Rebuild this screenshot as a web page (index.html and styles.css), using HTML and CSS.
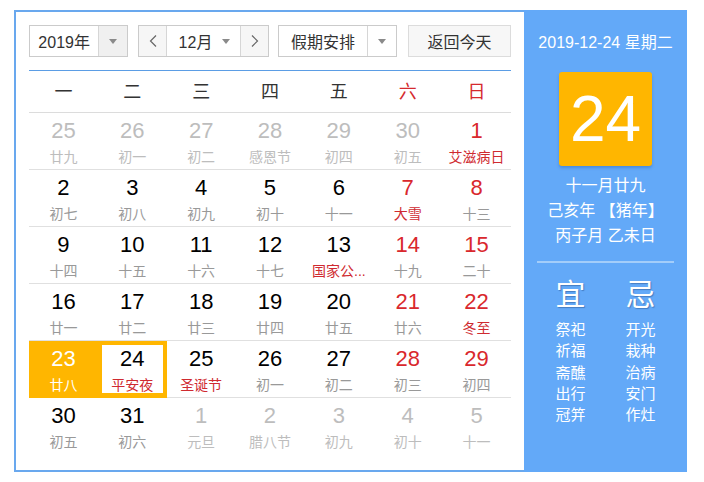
FILE: index.html
```html
<!DOCTYPE html>
<html lang="zh-CN">
<head>
<meta charset="utf-8">
<title>万年历</title>
<link rel="stylesheet" href="styles.css">
</head>
<body>
<div class="cal">
  <div class="main">
    <div class="controls">
      <div class="sel year"><span class="sel-text">2019年</span><span class="sel-arrow gray"><i class="tri"></i></span></div>
      <div class="month">
        <span class="nav"><svg width="8" height="12" viewBox="0 0 8 12"><polyline points="7,0.5 1.5,6 7,11.5" fill="none" stroke="#666" stroke-width="1.2"/></svg></span>
        <span class="month-text">12月<i class="tri"></i></span>
        <span class="nav"><svg width="8" height="12" viewBox="0 0 8 12"><polyline points="1,0.5 6.5,6 1,11.5" fill="none" stroke="#666" stroke-width="1.2"/></svg></span>
      </div>
      <div class="sel holiday"><span class="sel-text">假期安排</span><span class="sel-arrow"><i class="tri"></i></span></div>
      <div class="today-btn">返回今天</div>
    </div>
    <div class="week">
      <span>一</span><span>二</span><span>三</span><span>四</span><span>五</span><span class="red">六</span><span class="red">日</span>
    </div>
    <div class="grid">
      <div class="cell other"><b>25</b><em>廿九</em></div>
      <div class="cell other"><b>26</b><em>初一</em></div>
      <div class="cell other"><b>27</b><em>初二</em></div>
      <div class="cell other"><b>28</b><em>感恩节</em></div>
      <div class="cell other"><b>29</b><em>初四</em></div>
      <div class="cell other"><b>30</b><em>初五</em></div>
      <div class="cell wk fest"><b>1</b><em>艾滋病日</em></div>

      <div class="cell"><b>2</b><em>初七</em></div>
      <div class="cell"><b>3</b><em>初八</em></div>
      <div class="cell"><b>4</b><em>初九</em></div>
      <div class="cell"><b>5</b><em>初十</em></div>
      <div class="cell"><b>6</b><em>十一</em></div>
      <div class="cell wk fest"><b>7</b><em>大雪</em></div>
      <div class="cell wk"><b>8</b><em>十三</em></div>

      <div class="cell"><b>9</b><em>十四</em></div>
      <div class="cell"><b>10</b><em>十五</em></div>
      <div class="cell"><b>11</b><em>十六</em></div>
      <div class="cell"><b>12</b><em>十七</em></div>
      <div class="cell fest"><b>13</b><em>国家公...</em></div>
      <div class="cell wk"><b>14</b><em>十九</em></div>
      <div class="cell wk"><b>15</b><em>二十</em></div>

      <div class="cell"><b>16</b><em>廿一</em></div>
      <div class="cell"><b>17</b><em>廿二</em></div>
      <div class="cell"><b>18</b><em>廿三</em></div>
      <div class="cell"><b>19</b><em>廿四</em></div>
      <div class="cell"><b>20</b><em>廿五</em></div>
      <div class="cell wk"><b>21</b><em>廿六</em></div>
      <div class="cell wk fest"><b>22</b><em>冬至</em></div>

      <div class="cell selected"><b>23</b><em>廿八</em></div>
      <div class="cell today fest"><b>24</b><em>平安夜</em></div>
      <div class="cell fest"><b>25</b><em>圣诞节</em></div>
      <div class="cell"><b>26</b><em>初一</em></div>
      <div class="cell"><b>27</b><em>初二</em></div>
      <div class="cell wk"><b>28</b><em>初三</em></div>
      <div class="cell wk"><b>29</b><em>初四</em></div>

      <div class="cell last"><b>30</b><em>初五</em></div>
      <div class="cell last"><b>31</b><em>初六</em></div>
      <div class="cell last other"><b>1</b><em>元旦</em></div>
      <div class="cell last other"><b>2</b><em>腊八节</em></div>
      <div class="cell last other"><b>3</b><em>初九</em></div>
      <div class="cell last other"><b>4</b><em>初十</em></div>
      <div class="cell last other"><b>5</b><em>十一</em></div>
    </div>
  </div>
  <div class="side">
    <div class="side-date">2019-12-24 星期二</div>
    <div class="big-day">24</div>
    <div class="lunar">
      <div>十一月廿九</div>
      <div>己亥年 【猪年】</div>
      <div>丙子月 乙未日</div>
    </div>
    <div class="sep"></div>
    <div class="yiji">
      <div class="col">
        <div class="yj-title">宜</div>
        <div class="yj-item">祭祀</div>
        <div class="yj-item">祈福</div>
        <div class="yj-item">斋醮</div>
        <div class="yj-item">出行</div>
        <div class="yj-item">冠笄</div>
      </div>
      <div class="col">
        <div class="yj-title">忌</div>
        <div class="yj-item">开光</div>
        <div class="yj-item">栽种</div>
        <div class="yj-item">治病</div>
        <div class="yj-item">安门</div>
        <div class="yj-item">作灶</div>
      </div>
    </div>
  </div>
</div>
</body>
</html>
```

FILE: styles.css
```css
* { box-sizing: border-box; }
body {
  margin: 0;
  background: #fff;
  font-family: "Liberation Sans", Arial, "Noto Sans CJK SC", sans-serif;
  color: #333;
}
.cal {
  display: flex;
  margin: 10px 0 0 14px;
  width: 673px;
  height: 462px;
}
.main {
  width: 510px;
  height: 462px;
  border: 2px solid #69a8ee;
  border-right: none;
  padding: 13px 13px 0 13px;
}
.controls {
  display: flex;
  height: 32px;
  font-size: 16px;
  color: #333;
}
.sel {
  display: flex;
  height: 32px;
  border: 1px solid #cbcbcb;
  background: #fff;
}
.sel-text {
  display: flex;
  align-items: center;
  justify-content: center;
}
.sel-arrow {
  width: 29px;
  display: flex;
  align-items: center;
  justify-content: center;
  border-left: 1px solid #d6d6d6;
}
.sel-arrow.gray { background: #f0f0f0; }
.tri {
  display: inline-block;
  width: 0;
  height: 0;
  border-left: 4px solid transparent;
  border-right: 4px solid transparent;
  border-top: 5px solid #8a8a8a;
}
.year { width: 99px; }
.year .sel-text { width: 69px; }
.month {
  display: flex;
  margin-left: 10px;
  width: 131px;
  height: 32px;
  border: 1px solid #cbcbcb;
}
.nav {
  width: 28px;
  display: flex;
  align-items: center;
  justify-content: center;
  background: #f6f6f6;
}
.nav:first-child { border-right: 1px solid #d6d6d6; }
.nav:last-child { border-left: 1px solid #d6d6d6; }
.month-text {
  flex: 1;
  display: flex;
  align-items: center;
  justify-content: center;
  gap: 10px;
  padding-left: 2px;
}
.holiday { margin-left: 9px; width: 119px; }
.holiday .sel-text { width: 89px; }
.holiday .sel-arrow { width: 29px; }
.today-btn {
  margin-left: 11px;
  width: 103px;
  height: 32px;
  border: 1px solid #dcdcdc;
  background: #f7f7f7;
  display: flex;
  align-items: center;
  justify-content: center;
}
.week {
  margin-top: 13px;
  border-top: 1px solid #5b9de5;
  border-bottom: 1px solid #dcdcdc;
  display: grid;
  grid-template-columns: repeat(7, 1fr);
  height: 43px;
  font-size: 18px;
  color: #333;
}
.week span {
  display: flex;
  align-items: center;
  justify-content: center;
  padding-bottom: 3px;
}
.week .red { color: #d52a2e; }
.grid {
  display: grid;
  grid-template-columns: repeat(7, 1fr);
  grid-auto-rows: 57px;
}
.cell {
  border-bottom: 1px solid #e0e0e0;
  display: flex;
  flex-direction: column;
  align-items: center;
  padding-top: 5px;
  overflow: hidden;
  white-space: nowrap;
}
.cell.last { border-bottom: none; }
.cell b {
  font-weight: normal;
  font-size: 22px;
  line-height: 26px;
  color: #000;
}
.cell em {
  font-style: normal;
  font-size: 14px;
  line-height: 20px;
  margin-top: 3px;
  color: #999;
}
.cell.wk b { color: #d9282d; }
.cell.fest em { color: #cf2a30; }
.cell.other b,
.cell.other em { color: #bdbdbd; }
.cell.selected {
  background: #ffb600;
  border-bottom-color: #ffb600;
}
.cell.selected b,
.cell.selected em { color: #fff; }
.cell.today {
  background: #fff;
  box-shadow: inset 0 0 0 4px #ffb600;
  border-bottom-color: #ffb600;
}
.side {
  width: 163px;
  height: 462px;
  background: #63a9f8;
  color: #fff;
  text-align: center;
  padding-top: 23px;
  display: flex;
  flex-direction: column;
  align-items: center;
}
.side-date {
  font-size: 16px;
  line-height: 20px;
}
.big-day {
  margin-top: 19px;
  width: 93px;
  height: 94px;
  background: #ffb600;
  border-radius: 3px;
  box-shadow: 0 2px 3px rgba(0, 60, 140, 0.25);
  font-size: 64px;
  line-height: 94px;
  color: #fff;
}
.lunar {
  margin-top: 7px;
  font-size: 16px;
  line-height: 25px;
}
.sep {
  margin-top: 13px;
  width: 137px;
  height: 2px;
  background: #a3cdfa;
}
.yiji {
  margin-top: 14px;
  display: flex;
}
.col {
  width: 70px;
  display: flex;
  flex-direction: column;
  align-items: center;
}
.yj-title {
  font-size: 30px;
  line-height: 36px;
  text-shadow: 1px 1px 1px rgba(40, 80, 140, 0.5);
}
.yj-item {
  font-size: 15px;
  line-height: 21.3px;
}
.yj-title + .yj-item { margin-top: 6px; }
```
